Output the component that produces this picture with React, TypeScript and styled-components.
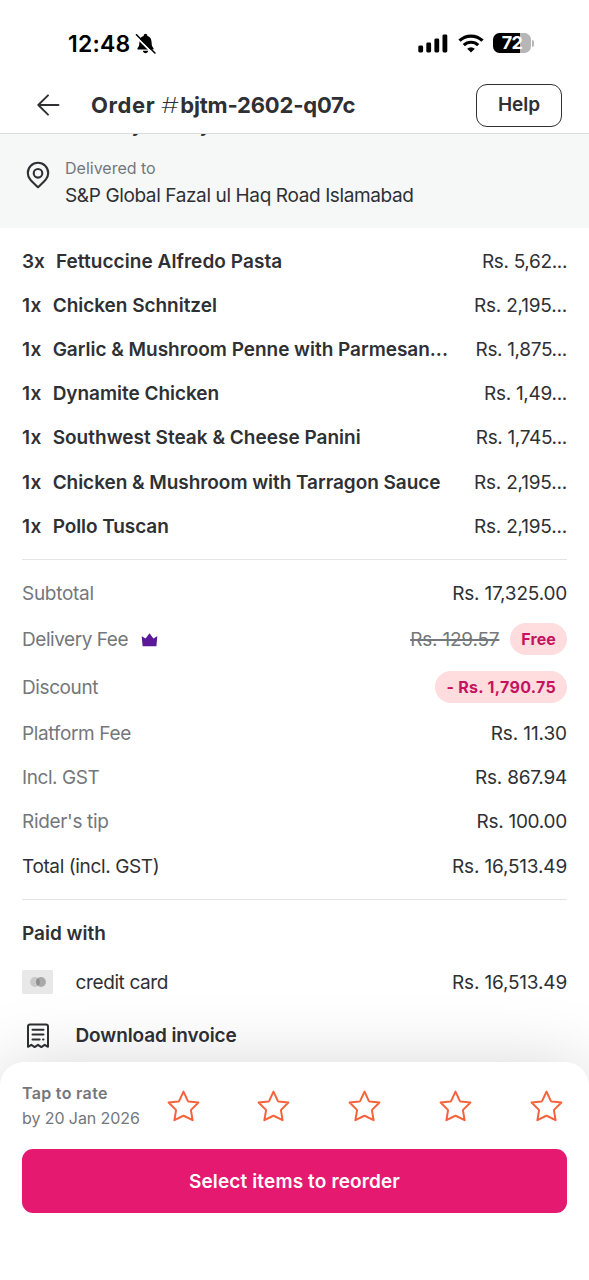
import React from 'react';
import styled, { createGlobalStyle } from 'styled-components';

const ink = '#2f3034';
const muted = '#74777b';

const GlobalStyle = createGlobalStyle`
  * { box-sizing: border-box; }
  body { margin: 0; background: #fff; }
  button { font: inherit; padding: 0; background: none; border: 0; cursor: pointer; }
  svg { display: block; flex: none; }
`;

const Screen = styled.main`
  width: 589px;
  height: 1280px;
  display: flex;
  flex-direction: column;
  overflow: hidden;
  background: #fff;
  color: ${ink};
  font-family: Inter, 'Liberation Sans', sans-serif;
`;

const Text = styled.span<{ $size?: number; $weight?: number; $track?: number; $color?: string }>`
  padding-top: 2px;
  font-size: ${(p) => p.$size ?? 19}px;
  font-weight: ${(p) => p.$weight ?? 400};
  letter-spacing: ${(p) => p.$track ?? 0}px;
  color: ${(p) => p.$color ?? ink};
  line-height: 26px;
  white-space: nowrap;
`;

const StatusBar = styled.div`
  height: 77px;
  flex: none;
  display: flex;
  align-items: center;
  justify-content: space-between;
  padding: 9px 55px 0 68px;
`;

const StatusGroup = styled.div<{ $gap: number }>`
  display: flex;
  align-items: center;
  gap: ${(p) => p.$gap}px;
`;

const Battery = styled.div`
  width: 38px;
  height: 20px;
  border-radius: 6.5px;
  background: linear-gradient(to right, #000 27px, #b6b6b6 27px);
  display: flex;
  align-items: center;
  justify-content: center;
`;

const BatteryLevel = styled.span`
  color: #fff;
  font-size: 18px;
  font-weight: 700;
  line-height: 20px;
  letter-spacing: -0.6px;
`;

const BatteryTip = styled.div`
  width: 2px;
  height: 7px;
  margin-left: 1px;
  border-radius: 0 2px 2px 0;
  background: #b6b6b6;
`;

const Header = styled.header`
  height: 57px;
  flex: none;
  display: flex;
  align-items: center;
  padding: 0 27px 0 36px;
  border-bottom: 1.5px solid #d9dddd;
`;

const BackButton = styled.button`
  margin-right: 31px;
`;

const Title = styled.h1`
  margin: 0;
  flex: 1;
  display: flex;
  align-items: baseline;
  font-size: 22px;
  font-weight: 700;
  line-height: 28px;
  letter-spacing: -0.2px;
  white-space: nowrap;
`;

const TitleWord = styled.span`
  margin-right: 6px;
  letter-spacing: 0.6px;
`;

const Hash = styled.span`
  margin-right: 1px;
  transform: scaleX(1.28);
  transform-origin: left;
  width: 18px;
  font-weight: 200;
`;

const HelpButton = styled.button`
  width: 86px;
  height: 43px;
  border: 1.5px solid ${ink};
  border-radius: 11px;
`;

const Content = styled.div`
  flex: 1;
  min-height: 0;
  overflow: hidden;
`;

const AddressBand = styled.section`
  height: 94px;
  display: flex;
  align-items: flex-end;
  gap: 15px;
  padding: 0 26px 19px;
  overflow: hidden;
  background: #f6f8f8;
`;

const PinSlot = styled.div`
  padding-bottom: 20px;
`;

const AddressLines = styled.div`
  display: flex;
  flex-direction: column;
`;

const RestaurantName = styled(Text)`
  margin-bottom: 15px;
`;

const AddressCaption = styled(Text)`
  line-height: 25px;
`;

const Section = styled.section`
  margin: 0 22px;
  padding: 11px 0;
  border-bottom: 1px solid #e3e4e6;
`;

const Row = styled.div<{ $height?: number }>`
  height: ${(p) => p.$height ?? 44.15}px;
  display: flex;
  align-items: center;
`;

const ItemRow = styled(Row)`
  height: 44.1px;
`;

const ItemName = styled(Text)`
  flex: 1;
  margin-left: 11px;
`;

const Label = styled(Text)`
  flex: 1;
  display: flex;
  align-items: center;
  gap: 13px;
`;

const Pill = styled.span`
  height: 32px;
  margin-left: 11px;
  padding: 0 11px;
  display: flex;
  align-items: center;
  border-radius: 16px;
  background: #ffdcde;
`;

const PillText = styled.span<{ $track: number }>`
  color: #c5145f;
  font-size: 16px;
  font-weight: 650;
  line-height: 26px;
  letter-spacing: ${(p) => p.$track}px;
  white-space: nowrap;
`;

const OldPrice = styled(Text)`
  text-decoration: line-through;
  text-decoration-thickness: 2px;
`;

const Payment = styled.section`
  padding: 11px 22px 0;
`;

const PaymentIcon = styled.div`
  width: 53.5px;
  display: flex;
  align-items: center;
`;

const CardBadge = styled.div`
  width: 31px;
  height: 24px;
  border-radius: 1.5px;
  background: #e8e8e8;
  display: flex;
  align-items: center;
  justify-content: center;
`;

const InvoiceIcon = styled.div`
  width: 53.5px;
  padding: 1px 0 0 4px;
`;

const Sheet = styled.footer`
  position: relative;
  height: 218px;
  flex: none;
  padding: 19px 22px 0;
  border-radius: 24px 24px 0 0;
  background: #fff;
  box-shadow: 0 4px 72px rgba(0, 0, 0, 0.17);
`;

const RateRow = styled.div`
  height: 68px;
  display: flex;
  align-items: flex-start;
`;

const RateText = styled.div`
  width: 144.5px;
  display: flex;
  flex-direction: column;
`;

const RateLine = styled.span<{ $weight: number; $track: number }>`
  color: ${muted};
  font-size: 16px;
  font-weight: ${(p) => p.$weight};
  line-height: 24.5px;
  letter-spacing: ${(p) => p.$track}px;
`;

const Stars = styled.div`
  width: 396px;
  padding-top: 9px;
  display: flex;
  justify-content: space-between;
`;

const ReorderButton = styled.button`
  width: 545px;
  height: 64px;
  padding-top: 1px;
  border-radius: 11px;
  background: #e4196f;
`;

const items = [
  { qty: '3x', name: 'Fettuccine Alfredo Pasta', price: 'Rs. 5,62...', track: 0.06, priceTrack: -0.35 },
  { qty: '1x', name: 'Chicken Schnitzel', price: 'Rs. 2,195...', track: -0.03, priceTrack: -0.2 },
  { qty: '1x', name: 'Garlic & Mushroom Penne with Parmesan...', price: 'Rs. 1,875...', track: -0.03, priceTrack: -0.35 },
  { qty: '1x', name: 'Dynamite Chicken', price: 'Rs. 1,49...', track: -0.03, priceTrack: -0.3 },
  { qty: '1x', name: 'Southwest Steak & Cheese Panini', price: 'Rs. 1,745...', track: 0.01, priceTrack: -0.35 },
  { qty: '1x', name: 'Chicken & Mushroom with Tarragon Sauce', price: 'Rs. 2,195...', track: -0.05, priceTrack: -0.2 },
  { qty: '1x', name: 'Pollo Tuscan', price: 'Rs. 2,195...', track: -0.08, priceTrack: -0.2 },
];

const fees = [
  { label: 'Platform Fee', value: 'Rs. 11.30', track: -0.35, valueTrack: -0.1 },
  { label: 'Incl. GST', value: 'Rs. 867.94', track: -0.42, valueTrack: -0.25 },
  { label: "Rider's tip", value: 'Rs. 100.00', track: -0.33, valueTrack: -0.27 },
];

const BellOff = () => (
  <svg width="21" height="21" viewBox="0 0 20 20">
    <path d="M3 15.7c-.7 0-1-.6-.6-1.2C3.6 13 4.100 12 4.200 8.800 4.300 5.400 5.700 3.500 8.200 2.800 8.300 1.500 9 .7 10 .7s1.700.8 1.800 2.100c2.500.7 3.900 2.600 4 6 .1 3.200.6 4.200 1.800 5.700.4.6.1 1.200-.6 1.200zM7.500 17h5c-.2 1.300-1.200 2.200-2.500 2.200S7.700 18.300 7.500 17z" fill="#000" />
    <path d="M.2 2.800 17.800 20.200" stroke="#fff" strokeWidth="1.800" />
    <path d="M1.400 1.700 19 19" stroke="#000" strokeWidth="1.500" strokeLinecap="round" />
  </svg>
);

const Signal = () => (
  <svg width="30" height="19" viewBox="0 0 30 19">
    <rect x="0.300" y="11.500" width="4.800" height="7" rx="1.400" />
    <rect x="8.300" y="8.500" width="4.800" height="10" rx="1.400" />
    <rect x="16.400" y="4.600" width="4.800" height="13.900" rx="1.400" />
    <rect x="24.500" y="0.500" width="4.800" height="18" rx="1.400" />
  </svg>
);

const Wifi = () => (
  <svg width="26" height="19" viewBox="0 0 26 19" fill="none" stroke="#000" strokeWidth="3.200">
    <path d="M1.500 6.700a16.500 16.500 0 0 1 23 0" />
    <path d="M5.800 11.200a10.300 10.300 0 0 1 14.400 0" />
    <path d="M13 18.600 9.200 14.700a5.500 5.500 0 0 1 7.600 0z" fill="#000" stroke="none" />
  </svg>
);

const BackArrow = () => (
  <svg width="24" height="22" viewBox="0 0 24 22" fill="none" stroke={ink} strokeWidth="1.900" strokeLinecap="round" strokeLinejoin="round">
    <path d="M22.500 11H2.500M12 1.300 2.300 11l9.700 9.700" />
  </svg>
);

const Pin = () => (
  <svg width="24" height="28" viewBox="0 0 24 28" fill="none" stroke={ink} strokeWidth="2.100" strokeLinejoin="round">
    <path d="M12 26.300C9.500 23.600 6.500 21.400 4.300 18.700 2.700 16.700 1.800 14.400 1.800 12a10.200 10.200 0 0 1 20.400 0c0 2.400-.9 4.700-2.500 6.700-2.200 2.700-5.200 4.900-7.700 7.600z" />
    <circle cx="12" cy="12.300" r="4.300" />
  </svg>
);

const Crown = () => (
  <svg width="17" height="14" viewBox="0 0 17 14">
    <path d="M.7 3.200 4.600 5.500 8.500.2l3.900 5.300 3.900-2.300-.9 10H1.600z" fill="#5b1897" />
  </svg>
);

const CardCircles = () => (
  <svg width="16" height="10" viewBox="0 0 16 10">
    <circle cx="5" cy="5" r="4.900" fill="#c8c8c8" />
    <circle cx="11" cy="5" r="4.900" fill="#a9a9a9" />
    <path d="M8 1.100a4.900 4.900 0 0 1 0 7.800 4.900 4.900 0 0 1 0-7.800z" fill="#8e8e8e" />
  </svg>
);

const Receipt = () => (
  <svg width="24" height="26" viewBox="0 0 24 26" fill="none" stroke={ink} strokeWidth="2" strokeLinejoin="round" strokeLinecap="round">
    <path d="M2 23.800V3.500Q2 1.500 4 1.500h16q2 0 2 2v20.300l-3.300-2-3.300 2.300-3.400-2.300-3.400 2.300-3.300-2.300z" />
    <path d="M6.500 6.700h11M6.500 11.500h11M6.500 16.500h7.200M17 16.500h.5" />
  </svg>
);

const Star = () => (
  <svg width="33" height="32" viewBox="0 0 33 32">
    <path
      d="M16.500 1.600 20.700 10.700Q21 11.300 21.700 11.400L31.400 12.500 24.300 19.600Q23.900 20 24 20.600L25.600 30.200 17.200 26Q16.500 25.700 15.800 26L7.400 30.200 9 20.600Q9.100 20 8.700 19.600L1.600 12.500 11.300 11.400Q12 11.300 12.300 10.700Z"
      fill="none"
      stroke="#f4643c"
      strokeWidth="2"
      strokeLinejoin="round"
    />
  </svg>
);

export default function App() {
  return (
    <Screen>
      <GlobalStyle />
      <StatusBar>
        <StatusGroup $gap={5}>
          <Text $size={23} $weight={600} $color="#000" $track={0.2}>12:48</Text>
          <BellOff />
        </StatusGroup>
        <StatusGroup $gap={9.5}>
          <Signal />
          <Wifi />
          <StatusGroup $gap={0}>
            <Battery><BatteryLevel>72</BatteryLevel></Battery>
            <BatteryTip />
          </StatusGroup>
        </StatusGroup>
      </StatusBar>
      <Header>
        <BackButton aria-label="Back"><BackArrow /></BackButton>
        <Title><TitleWord>Order</TitleWord><Hash>#</Hash>bjtm-2602-q07c</Title>
        <HelpButton><Text $weight={600}>Help</Text></HelpButton>
      </Header>
      <Content>
        <AddressBand>
          <PinSlot><Pin /></PinSlot>
          <AddressLines>
            <RestaurantName $weight={600}>Tuscany Courtyard</RestaurantName>
            <AddressCaption $size={16} $color={muted}>Delivered to</AddressCaption>
            <Text $track={-0.38}>S&amp;P Global Fazal ul Haq Road Islamabad</Text>
          </AddressLines>
        </AddressBand>
        <Section>
          {items.map((item) => (
            <ItemRow key={item.name}>
              <Text $weight={600} $track={item.qty === '1x' ? 0.4 : 0}>{item.qty}</Text>
              <ItemName $weight={600} $track={item.track}>{item.name}</ItemName>
              <Text $track={item.priceTrack}>{item.price}</Text>
            </ItemRow>
          ))}
        </Section>
        <Section>
          <Row>
            <Label $color={muted} $track={-0.28}>Subtotal</Label>
            <Text $track={-0.2}>Rs. 17,325.00</Text>
          </Row>
          <Row $height={48.3}>
            <Label $color={muted} $track={-0.45}>Delivery Fee<Crown /></Label>
            <OldPrice $color={muted} $track={-0.2}>Rs. 129.57</OldPrice>
            <Pill><PillText $track={0.1}>Free</PillText></Pill>
          </Row>
          <Row $height={48}>
            <Label $color={muted} $track={-0.4}>Discount</Label>
            <Pill><PillText $track={0.3}>- Rs. 1,790.75</PillText></Pill>
          </Row>
          {fees.map((fee) => (
            <Row key={fee.label}>
              <Label $color={muted} $track={fee.track}>{fee.label}</Label>
              <Text $track={fee.valueTrack}>{fee.value}</Text>
            </Row>
          ))}
          <Row>
            <Label $track={-0.38}>Total (incl. GST)</Label>
            <Text $track={-0.18}>Rs. 16,513.49</Text>
          </Row>
        </Section>
        <Payment>
          <Row>
            <Text $weight={600}>Paid with</Text>
          </Row>
          <Row $height={54}>
            <PaymentIcon><CardBadge><CardCircles /></CardBadge></PaymentIcon>
            <Label $track={-0.38}>credit card</Label>
            <Text $track={-0.18}>Rs. 16,513.49</Text>
          </Row>
          <Row $height={53}>
            <InvoiceIcon><Receipt /></InvoiceIcon>
            <Text $weight={600} $track={-0.1}>Download invoice</Text>
          </Row>
        </Payment>
      </Content>
      <Sheet>
        <RateRow>
          <RateText>
            <RateLine $weight={600} $track={0.32}>Tap to rate</RateLine>
            <RateLine $weight={400} $track={-0.08}>by 20 Jan 2026</RateLine>
          </RateText>
          <Stars>{[1, 2, 3, 4, 5].map((n) => <Star key={n} />)}</Stars>
        </RateRow>
        <ReorderButton><Text $weight={600} $color="#fff" $track={0.13}>Select items to reorder</Text></ReorderButton>
      </Sheet>
    </Screen>
  );
}
